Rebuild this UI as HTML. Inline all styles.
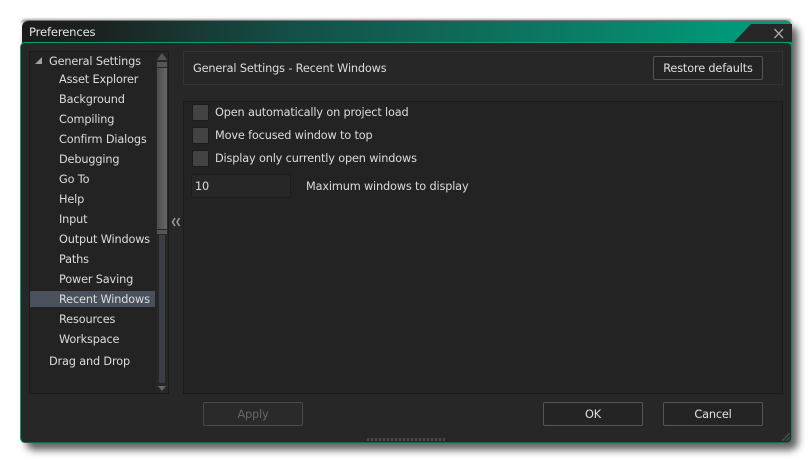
<!DOCTYPE html>
<html><head><meta charset="utf-8"><style>
html,body{margin:0;padding:0;background:#fff;width:812px;height:463px;overflow:hidden}
*{box-sizing:border-box}
body{font-family:"DejaVu Sans","Liberation Sans",sans-serif;font-size:11.3px;letter-spacing:-.16px;color:#dcdcdc;position:relative}
.a{position:absolute}
.t{position:absolute;white-space:nowrap;line-height:18px;height:18px;margin-top:1px}
.p{position:absolute;border:1px solid #1b1b1b;background:#232323}
.b{position:absolute;border:1px solid #555;border-radius:2px;background:#242424;text-align:center;line-height:24px;color:#e0e0e0}
.c{position:absolute;left:192px;width:17px;height:17px;background:#434343;border:1px solid #1c1c1c;border-radius:2px}
</style></head><body>
<div class="a" style="left:26px;top:26px;width:772px;height:424px;background:#3a3a3a;border-radius:8px;filter:blur(4px);opacity:.8"></div>
<div class="a" style="left:21px;top:19px;width:771px;height:4px;background:#aaa;border-radius:7px 7px 0 0;filter:blur(1px)"></div>
<div class="a" style="left:22px;top:20px;width:770px;height:40px;border-radius:7px 7px 0 0;background:linear-gradient(90deg,#1c1c1c 0,#1b2221 10%,#193a35 23%,#145048 36%,#0a8068 75%,#009878 92%);border-top:1px solid #777"></div>
<svg class="a" style="left:734px;top:21px" width="58" height="23"><polygon points="0,21 17,3 58,3 58,21" fill="#272727"/><path d="M40.500 8 L49 17 M49 8 L40.500 17" stroke="#a8a8a8" stroke-width="1.300" fill="none"/></svg>
<div class="t" style="left:29px;top:22px;font-size:11.600px;color:#e4e4e4">Preferences</div>
<div class="a" style="left:20px;top:42px;width:772px;height:401px;background:#272727;border:1px solid #0e9c70;border-radius:5px;border-bottom-color:#16664e;border-right-color:#16805f"></div>

<div class="p" style="left:29px;top:51px;width:140px;height:343px"></div>
<div class="a" style="left:30px;top:291px;width:125px;height:16px;background:#4a515c"></div>
<div class="a" style="left:156px;top:52px;width:12px;height:341px;background:#272727"></div>
<svg class="a" style="left:156px;top:52px" width="12" height="12"><polygon points="6,1 11,8 1,8" fill="#555"/></svg>
<div class="a" style="left:157px;top:62px;width:10px;height:5px;background:#555"></div>
<div class="a" style="left:157px;top:68px;width:10px;height:161px;background:linear-gradient(90deg,#4d4d4d,#666)"></div>
<div class="a" style="left:157px;top:230px;width:10px;height:4px;background:#555"></div>
<div class="a" style="left:159px;top:235px;width:6px;height:148px;background:#3a3e44"></div>
<svg class="a" style="left:156px;top:384px" width="12" height="9"><polygon points="2,2 10,2 6,7" fill="#666"/></svg>
<svg class="a" style="left:34px;top:56px" width="10" height="10"><polygon points="8,1 8,8 1,8" fill="#a0a0a0"/></svg>

<div class="t" style="left:49px;top:52px">General Settings</div>
<div class="t" style="left:59px;top:70px">Asset Explorer</div>
<div class="t" style="left:59px;top:90px">Background</div>
<div class="t" style="left:59px;top:110px">Compiling</div>
<div class="t" style="left:59px;top:130px">Confirm Dialogs</div>
<div class="t" style="left:59px;top:150px">Debugging</div>
<div class="t" style="left:59px;top:170px">Go To</div>
<div class="t" style="left:59px;top:190px">Help</div>
<div class="t" style="left:59px;top:210px">Input</div>
<div class="t" style="left:59px;top:230px">Output Windows</div>
<div class="t" style="left:59px;top:250px">Paths</div>
<div class="t" style="left:59px;top:270px">Power Saving</div>
<div class="t" style="left:59px;top:290px">Recent Windows</div>
<div class="t" style="left:59px;top:310px">Resources</div>
<div class="t" style="left:59px;top:330px">Workspace</div>
<div class="t" style="left:49px;top:352px">Drag and Drop</div>

<svg class="a" style="left:170px;top:216px" width="12" height="12"><path d="M5 2 L2.500 6 L5 10 M9.500 2 L7 6 L9.500 10" stroke="#9a9fa6" stroke-width="1.500" fill="none"/></svg>

<div class="a" style="left:183px;top:51px;width:600px;height:34px;border:1px solid #333;background:#272727"></div>
<div class="t" style="left:193px;top:59px">General Settings - Recent Windows</div>
<div class="b" style="left:653px;top:56px;width:110px;height:24px">Restore defaults</div>

<div class="p" style="left:183px;top:101px;width:600px;height:293px"></div>
<div class="c" style="top:104px"></div>
<div class="c" style="top:127px"></div>
<div class="c" style="top:150px"></div>
<div class="t" style="left:215px;top:103px">Open automatically on project load</div>
<div class="t" style="left:215px;top:126px">Move focused window to top</div>
<div class="t" style="left:215px;top:149px">Display only currently open windows</div>
<div class="a" style="left:191px;top:174px;width:100px;height:24px;background:#272727;border:1px solid #1c1c1c;border-radius:2px"></div>
<div class="t" style="left:195px;top:177px">10</div>
<div class="t" style="left:306px;top:177px">Maximum windows to display</div>

<div class="b" style="left:203px;top:402px;width:100px;height:24px;background:#2a2a2a;color:#666;border-color:#4a4a4a">Apply</div>
<div class="b" style="left:543px;top:402px;width:100px;height:24px">OK</div>
<div class="b" style="left:663px;top:402px;width:100px;height:24px">Cancel</div>
<div class="a" style="left:367px;top:438px;width:78px;height:3px;background:repeating-linear-gradient(90deg,#484848 0 2px,#2c2c2c 2px 4px)"></div>
<svg class="a" style="left:782px;top:433px" width="8" height="8"><path d="M0 8 L8 0 M4 8 L8 4" stroke="#4c4c4c" stroke-width="1.500"/></svg>
</body></html>
